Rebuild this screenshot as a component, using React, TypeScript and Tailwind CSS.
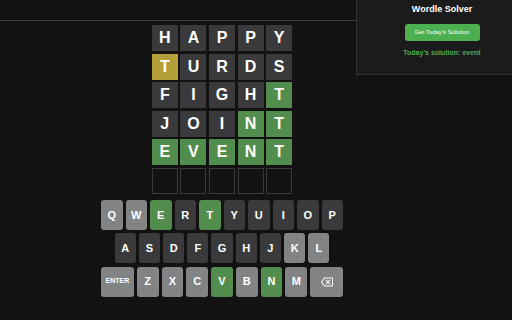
import React from "react";

type S = "g" | "y" | "a" | "e";

const rows: { l: string; s: S[] }[] = [
  { l: "HAPPY", s: ["a", "a", "a", "a", "a"] },
  { l: "TURDS", s: ["y", "a", "a", "a", "a"] },
  { l: "FIGHT", s: ["a", "a", "a", "a", "g"] },
  { l: "JOINT", s: ["a", "a", "a", "g", "g"] },
  { l: "EVENT", s: ["g", "g", "g", "g", "g"] },
  { l: "     ", s: ["e", "e", "e", "e", "e"] },
];

const tileCls: Record<S, string> = {
  g: "bg-[#538d4e]",
  y: "bg-[#b59f3b]",
  a: "bg-[#3a3a3c]",
  e: "bg-[#121212] border border-[#3a3a3c]",
};

const green = new Set(["E", "T", "V", "N"]);
const absent = new Set(["H", "A", "P", "Y", "U", "R", "D", "S", "F", "I", "G", "J", "O"]);

function keyBg(k: string) {
  if (green.has(k)) return "bg-[#538d4e]";
  if (absent.has(k)) return "bg-[#3a3a3c]";
  return "bg-[#818384]";
}

function Key({ k }: { k: string }) {
  return (
    <div
      className={`flex-1 h-[30px] rounded-[3px] flex items-center justify-center text-white font-bold text-[11px] ${keyBg(k)}`}
    >
      {k}
    </div>
  );
}

function Backspace() {
  return (
    <svg width="12" height="12" viewBox="0 0 24 24" fill="#ffffff">
      <path d="M22 3H7c-.69 0-1.23.35-1.59.88L0 12l5.41 8.11c.36.53.9.89 1.59.89h15c1.1 0 2-.9 2-2V5c0-1.1-.9-2-2-2zm0 16H7.07L2.4 12l4.66-7H22v14zm-11.59-2L14 13.41 17.59 17 19 15.59 15.41 12 19 8.41 17.59 7 14 10.59 10.41 7 9 8.41 12.59 12 9 15.59z" />
    </svg>
  );
}

export default function App() {
  return (
    <div
      className="relative w-[512px] h-[320px] overflow-hidden bg-[#121212]"
      style={{ fontFamily: '"Liberation Sans", Arial, sans-serif' }}
    >
      <div className="h-[21px] border-b border-[#3a3a3c]" />
      <div className="w-[444px] flex flex-col items-center pt-[4px]">
        <div className="grid grid-cols-5 gap-[2.6px]">
          {rows.map((r, i) =>
            r.l.split("").map((c, j) => (
              <div
                key={`${i}-${j}`}
                className={`w-[26px] h-[26px] box-border flex items-center justify-center text-white font-bold text-[16px] ${tileCls[r.s[j]]}`}
              >
                {c.trim()}
              </div>
            ))
          )}
        </div>
        <div className="w-[242px] mt-[6px] flex flex-col gap-[3.3px]">
          <div className="flex gap-[3px]">
            {"QWERTYUIOP".split("").map((k) => (
              <Key key={k} k={k} />
            ))}
          </div>
          <div className="flex gap-[3px]">
            <div className="flex-[0.5]" />
            {"ASDFGHJKL".split("").map((k) => (
              <Key key={k} k={k} />
            ))}
            <div className="flex-[0.5]" />
          </div>
          <div className="flex gap-[3px]">
            <div className="flex-[1.5] h-[30px] rounded-[3px] bg-[#818384] flex items-center justify-center text-white font-bold text-[7px]">
              ENTER
            </div>
            {"ZXCVBNM".split("").map((k) => (
              <Key key={k} k={k} />
            ))}
            <div className="flex-[1.5] h-[30px] rounded-[3px] bg-[#818384] flex items-center justify-center">
              <Backspace />
            </div>
          </div>
        </div>
      </div>

      <div className="absolute top-0 left-[356px] w-[156px] h-[75px] bg-[#1b1b1b] border-l border-b border-[#333333] flex flex-col items-center pl-[15px] pt-[4px]">
        <div className="text-white font-bold text-[9px] leading-[11px]">Wordle Solver</div>
        <div className="mt-[9px] w-[75px] h-[17px] rounded-[3px] bg-[#4caf50] flex items-center justify-center text-white text-[6px]">
          Get Today&apos;s Solution
        </div>
        <div className="mt-[7px] text-[#4caf50] font-bold text-[7px] leading-[9px]">
          Today&apos;s solution: event
        </div>
      </div>
    </div>
  );
}
